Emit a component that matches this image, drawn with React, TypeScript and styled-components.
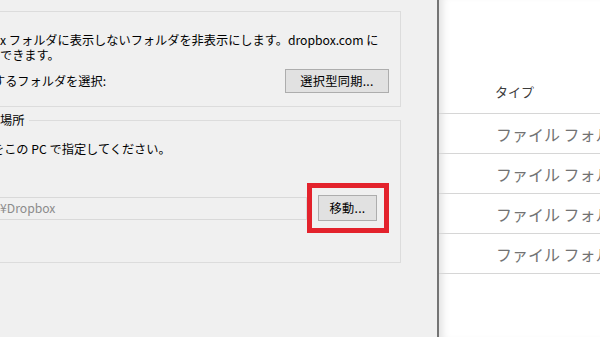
import styled, { createGlobalStyle } from 'styled-components';

const GlobalStyle = createGlobalStyle`
	html, body {
		margin: 0;
		padding: 0;
		width: 600px;
		height: 337px;
		overflow: hidden;
	}
	#root {
		height: 337px;
	}
`

const Screen = styled.div`
	display: flex;
	width: 600px;
	height: 337px;
	font-family: "Noto Sans CJK JP", "Liberation Sans", sans-serif;
`

// 左側: 設定ダイアログ (左端は画面外)
const Dialog = styled.div`
	width: 439px;
	flex-shrink: 0;
	background-color: #f0f0f0;
	border-right: 2px solid #747474;
	padding: 11px 36px 0 0;
	box-sizing: border-box;
	color: #000;
	font-size: 12.2px;
	line-height: 15px;
`

const Group = styled.div`
	border: 1px solid #dcdcdc;
	border-left: none;
	padding: 21px 11px 13px 0;
`

const Field = styled.fieldset`
	margin: 6px 0 0;
	border: 1px solid #dcdcdc;
	border-left: none;
	padding: 0 11px 29px 0;
	min-width: 0;
`

const Legend = styled.legend`
	padding: 0 5px 0 0;
	font-size: 12.2px;
	line-height: 15px;
`

const Line = styled.div<{ $indent?: number }>`
	white-space: nowrap;
	text-indent: ${props => props.$indent ?? 0}px;
`

const SpacedLine = styled(Line)`
	margin-top: 14px;
`

const Row = styled.div<{ $gap: number }>`
	display: flex;
	justify-content: space-between;
	align-items: center;
	margin-top: ${props => props.$gap}px;
`

const Button = styled.button<{ $w: number; $h: number }>`
	width: ${props => props.$w}px;
	height: ${props => props.$h}px;
	box-sizing: border-box;
	background-color: #e1e1e1;
	border: 1px solid #adadad;
	border-radius: 0;
	padding: 0;
	font-family: inherit;
	font-size: 12.2px;
	color: #000;
	letter-spacing: 0.3px;
`

const PathInput = styled.div`
	flex: 1;
	height: 23px;
	box-sizing: border-box;
	border: 1px solid #d9d9d9;
	border-left: none;
	display: flex;
	align-items: center;
	color: #8c8c8c;
	white-space: nowrap;
	overflow: hidden;
`

// 赤い強調枠
const Highlight = styled.div`
	border: 5px solid #e3222c;
	padding: 7px 7px 7px 6px;
	display: flex;
`

// 右側: エクスプローラーの一覧
const FileList = styled.div`
	flex: 1;
	background-color: #fff;
	box-shadow: inset 9px 0 9px -6px rgba(0, 0, 0, 0.13);
`

const Header = styled.div`
	height: 114px;
	box-sizing: border-box;
	border-bottom: 1px solid #d6d6d6;
	display: flex;
	align-items: flex-end;
	padding: 0 0 12px 56px;
	font-size: 13px;
	color: #3c3c3c;
`

const FileRow = styled.div`
	height: 40px;
	box-sizing: border-box;
	border-bottom: 1px solid #d6d6d6;
	display: flex;
	align-items: center;
	padding-left: 57px;
	font-size: 16px;
	color: #737373;
	white-space: nowrap;
	overflow: hidden;
`

const rows = ['ファイル フォルダー', 'ファイル フォルダー', 'ファイル フォルダー', 'ファイル フォルダー'];

function App() {
	return (
		<>
			<GlobalStyle />
			<Screen>
				<Dialog>
					<Group>
						<Line>x フォルダに表示しないフォルダを非表示にします。dropbox.com に</Line>
						<Line>できます。</Line>
						<Row $gap={6}>
							<Line $indent={-7}>するフォルダを選択:</Line>
							<Button $w={104} $h={24}>選択型同期...</Button>
						</Row>
					</Group>
					<Field>
						<Legend>場所</Legend>
						<SpacedLine $indent={-8}>をこの PC で指定してください。</SpacedLine>
						<Row $gap={26}>
							<PathInput>¥Dropbox</PathInput>
							<Highlight>
								<Button $w={59} $h={26}>移動...</Button>
							</Highlight>
						</Row>
					</Field>
				</Dialog>
				<FileList>
					<Header>タイプ</Header>
					{rows.map((name, i) => (
						<FileRow key={i}>{name}</FileRow>
					))}
				</FileList>
			</Screen>
		</>
	)
}

export default App;
